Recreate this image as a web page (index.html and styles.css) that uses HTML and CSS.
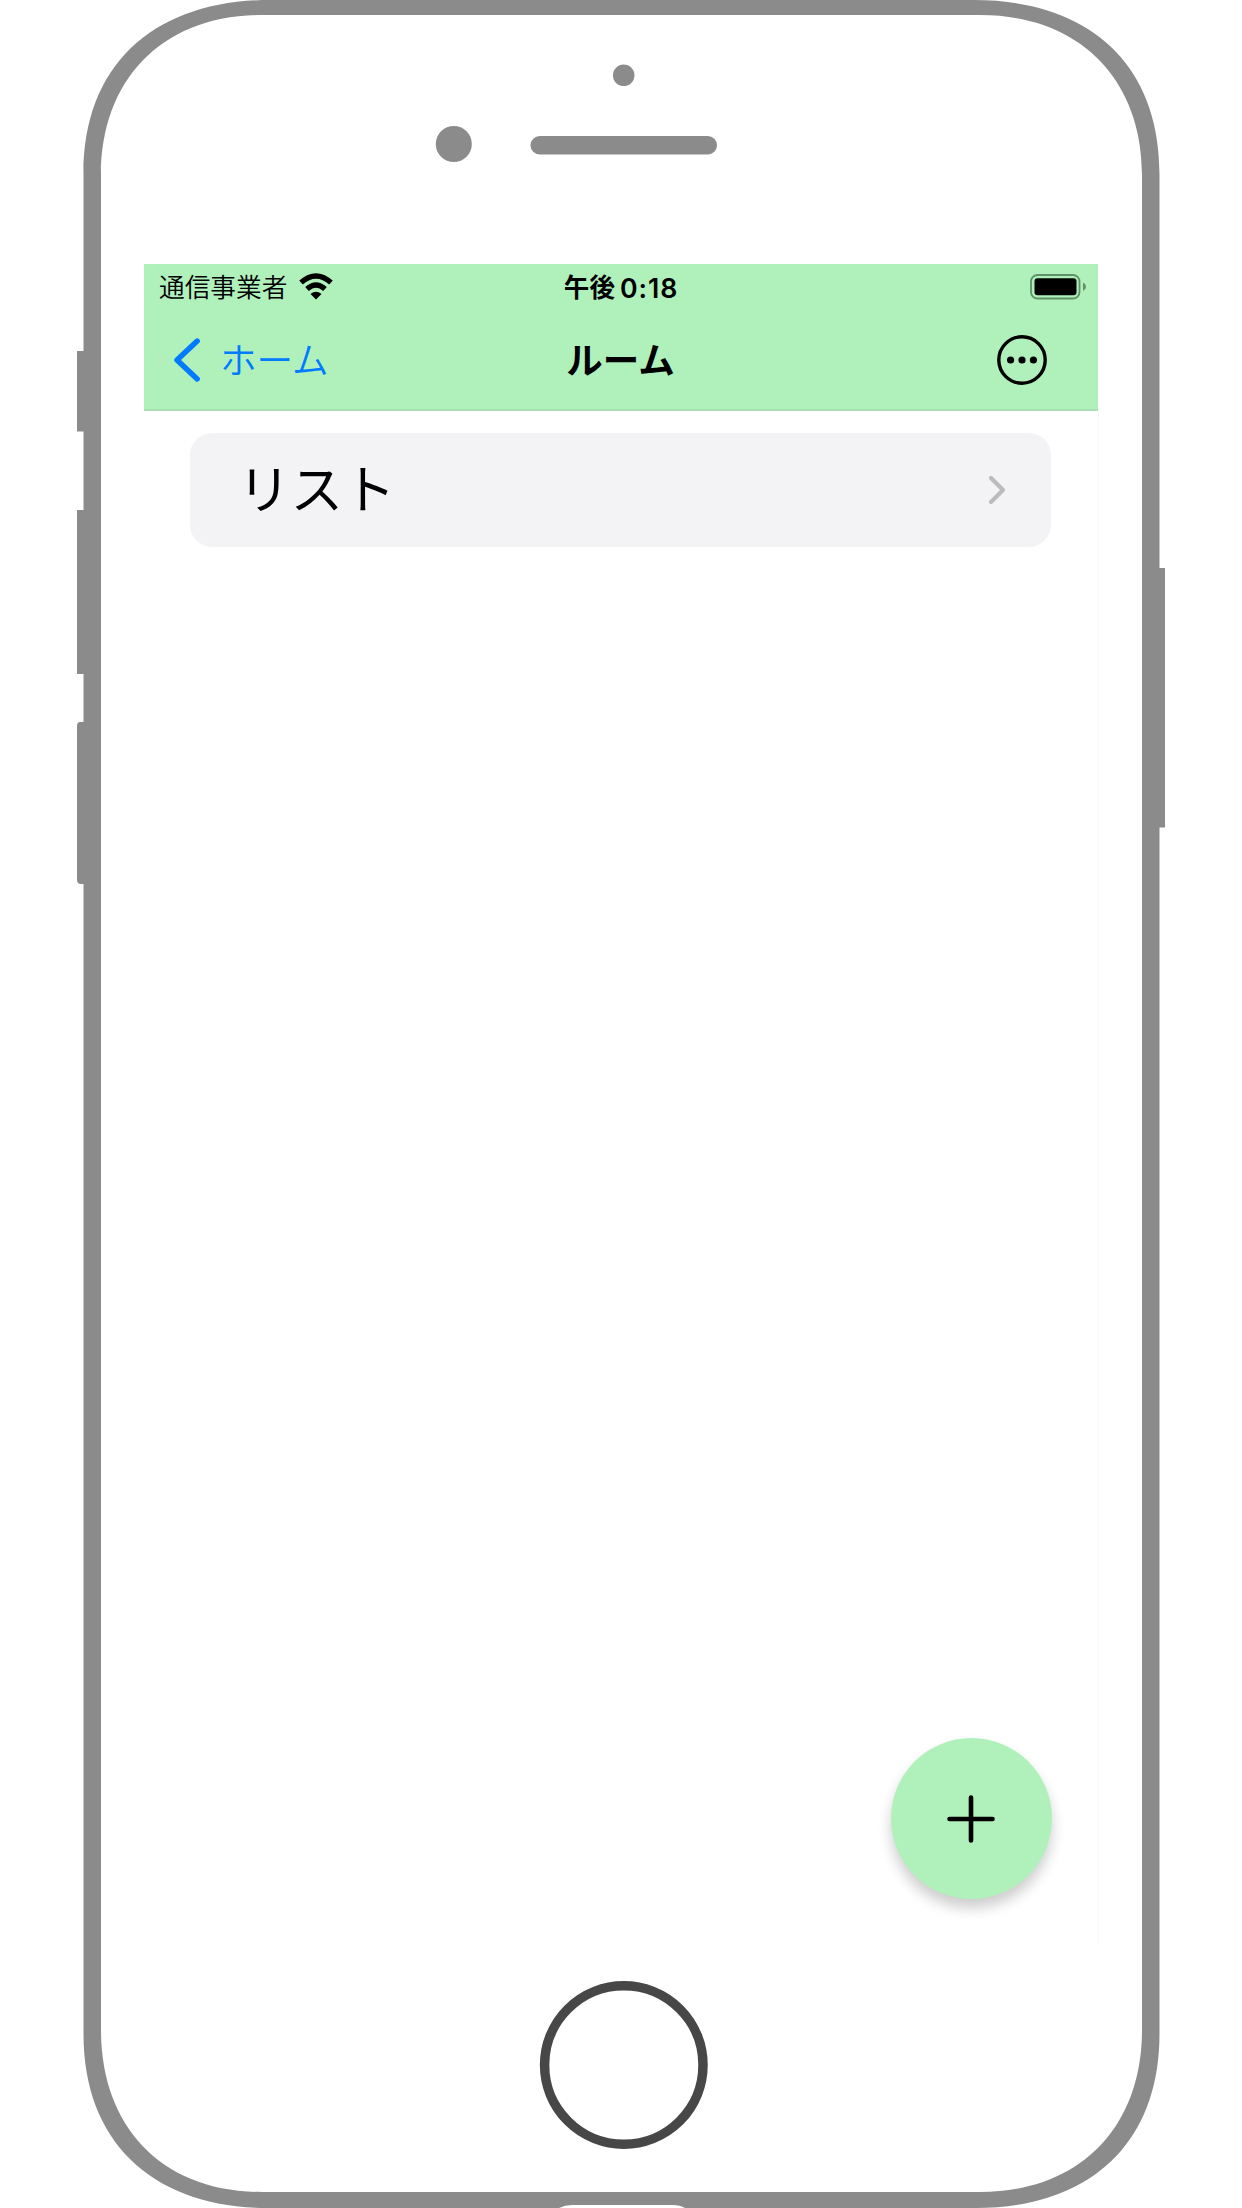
FILE: index.html
```html
<!DOCTYPE html>
<html lang="ja">
<head>
<meta charset="utf-8">
<title>ルーム</title>
<link rel="stylesheet" href="styles.css">
</head>
<body>
<div class="device">
  <svg class="device-frame" viewBox="0 0 1242 2208" aria-hidden="true">
    <g fill="#8b8b8b">
      <path fill-rule="evenodd" d="M83.500 174C83.500 61 158 0 270 0H974C1086 0 1159.500 61 1159.500 174V2034C1159.500 2145 1088 2208 976 2208H268C156 2208 83.500 2145 83.500 2034ZM101 175C101 80 162 15 262 15H980C1080 15 1142 80 1142 175V2030C1142 2127 1080 2192 980 2192H262C162 2192 101 2127 101 2030Z"/>
      <path d="M77 351H85V431.500H77ZM77 510H85V674H77ZM85 722H80Q77 722 77 726V880Q77 884 81 884H85ZM1159 568H1165V827.500H1159Z"/>
      <circle cx="623.700" cy="75.300" r="10.800"/>
      <circle cx="453.800" cy="144" r="18"/>
      <rect x="530.500" y="136" width="186.500" height="18.500" rx="9.250"/>
    </g>
    <path fill="#fff" d="M559 2208Q565 2205 572 2205H673Q680 2205 685 2208Z"/>
    <circle cx="623.800" cy="2065" r="79.200" fill="none" stroke="#474747" stroke-width="9.500"/>
  </svg>
  <main class="screen">
    <header class="header">
      <div class="status">
        <div class="carrier">
          <span>通信事業者</span>
          <svg class="wifi" width="36" height="27" viewBox="0 0 36 27">
            <path d="M3 9.500Q18 -3.500 33 9.500M9 16Q18 8 27 16" fill="none" stroke="#000" stroke-width="5.400"/>
            <path d="M18 26.500L12.500 21Q18 16.500 23.500 21Z"/>
          </svg>
        </div>
        <div class="time"><span>午後</span><span class="digits">0:18</span></div>
        <svg class="battery" width="57" height="26" viewBox="0 0 57 26">
          <rect x="1" y="1" width="48.500" height="23.500" rx="6.500" fill="none" stroke="#619169" stroke-width="1.800"/>
          <rect x="4.500" y="4.300" width="42" height="17" rx="3"/>
          <path d="M53 8.500Q56 10 56 12.750Q56 15.500 53 17Z" fill="#619169"/>
        </svg>
      </div>
      <nav class="navbar">
        <a class="back">
          <svg width="28" height="46" viewBox="0 0 28 46"><path d="M24.200 4L4 23L24.200 42" fill="none" stroke="#007aff" stroke-width="5.400" stroke-linecap="round" stroke-linejoin="round"/></svg>
          <span>ホーム</span>
        </a>
        <h1 class="title">ルーム</h1>
        <svg class="more" width="50" height="50" viewBox="0 0 50 50">
          <circle cx="25" cy="25" r="23.200" fill="none" stroke="#000" stroke-width="3.400"/>
          <circle cx="13.600" cy="25" r="3.600"/><circle cx="25" cy="25" r="3.600"/><circle cx="36.400" cy="25" r="3.600"/>
        </svg>
      </nav>
    </header>
    <section class="content">
      <a class="row">
        <span class="row-label">リスト</span>
        <svg width="20" height="32" viewBox="0 0 20 32"><path d="M4 4L16 16L4 28" fill="none" stroke="#bbbbbd" stroke-width="4.200" stroke-linecap="round" stroke-linejoin="round"/></svg>
      </a>
      <div class="fab">
        <svg width="50" height="50" viewBox="0 0 50 50"><path d="M25 3.500V46.500M3.500 25H46.500" stroke="#000" stroke-width="4.600" stroke-linecap="round"/></svg>
      </div>
    </section>
  </main>
</div>
</body>
</html>
```
FILE: styles.css
```css
* { box-sizing: border-box; }
body {
  margin: 0;
  background: #fff;
  color: #000;
  font-family: "Noto Sans CJK JP", sans-serif;
}
.device {
  position: relative;
  width: 1242px;
  height: 2208px;
  padding: 264px 143px 264px 144px;
  overflow: hidden;
}
.device-frame {
  position: absolute;
  inset: 0;
  width: 1242px;
  height: 2208px;
}
.screen {
  display: flex;
  flex-direction: column;
  height: 1680px;
  width: 955px;
}
.header {
  height: 147px;
  width: 954px;
  background: #b0f1bb;
  border-bottom: 2px solid #aadfb3;
}
.status {
  display: grid;
  grid-template-columns: 1fr auto 1fr;
  height: 48px;
  padding: 0 11px 0 15px;
  align-items: center;
}
.carrier {
  display: flex;
  align-items: center;
  gap: 11px;
  font-size: 25.700px;
  line-height: 46px;
  font-weight: 350;
}
.carrier span { margin-top: -4px; }
.wifi { margin-top: -3px; }
.time {
  display: flex;
  align-items: center;
  gap: 5px;
  margin-left: -4px;
  font-size: 25.600px;
  line-height: 46px;
  font-weight: 700;
}
.time span:first-child { margin-top: -4px; }
.time .digits {
  font: 600 26.700px/48px Inter, sans-serif;
  letter-spacing: 0.900px;
  margin-top: -1px;
}
.battery {
  justify-self: end;
  margin-top: -2px;
}
.navbar {
  display: grid;
  grid-template-columns: 1fr auto 1fr;
  align-items: center;
  height: 96px;
  padding: 0 51px 0 29px;
}
.back {
  display: flex;
  align-items: center;
  gap: 19px;
  color: #007aff;
  font-size: 36.600px;
  line-height: 54px;
  font-weight: 350;
}
.back span { margin-top: -2px; }
.title {
  margin: -3px 0 0 21px;
  font-size: 36.500px;
  line-height: 54px;
  font-weight: 700;
}
.more { justify-self: end; }
.content {
  flex: 1;
  display: flex;
  flex-direction: column;
  justify-content: space-between;
  padding: 22px 46px 45px 46px;
  border-right: 1px solid #f8f8f8;
}
.row {
  display: flex;
  align-items: center;
  justify-content: space-between;
  height: 114px;
  width: 861px;
  padding: 0 44px 0 48px;
  border-radius: 22px;
  background: #f3f3f6;
  font-size: 52.500px;
  line-height: 80px;
}
.row-label { margin-top: -8px; }
.fab {
  display: flex;
  align-items: center;
  justify-content: center;
  align-self: flex-end;
  width: 161px;
  height: 161px;
  padding: 0 1px 0 0;
  border-radius: 50%;
  background: #b0f1bb;
  box-shadow: 0 9px 14px rgba(0, 0, 0, 0.2);
}
```
